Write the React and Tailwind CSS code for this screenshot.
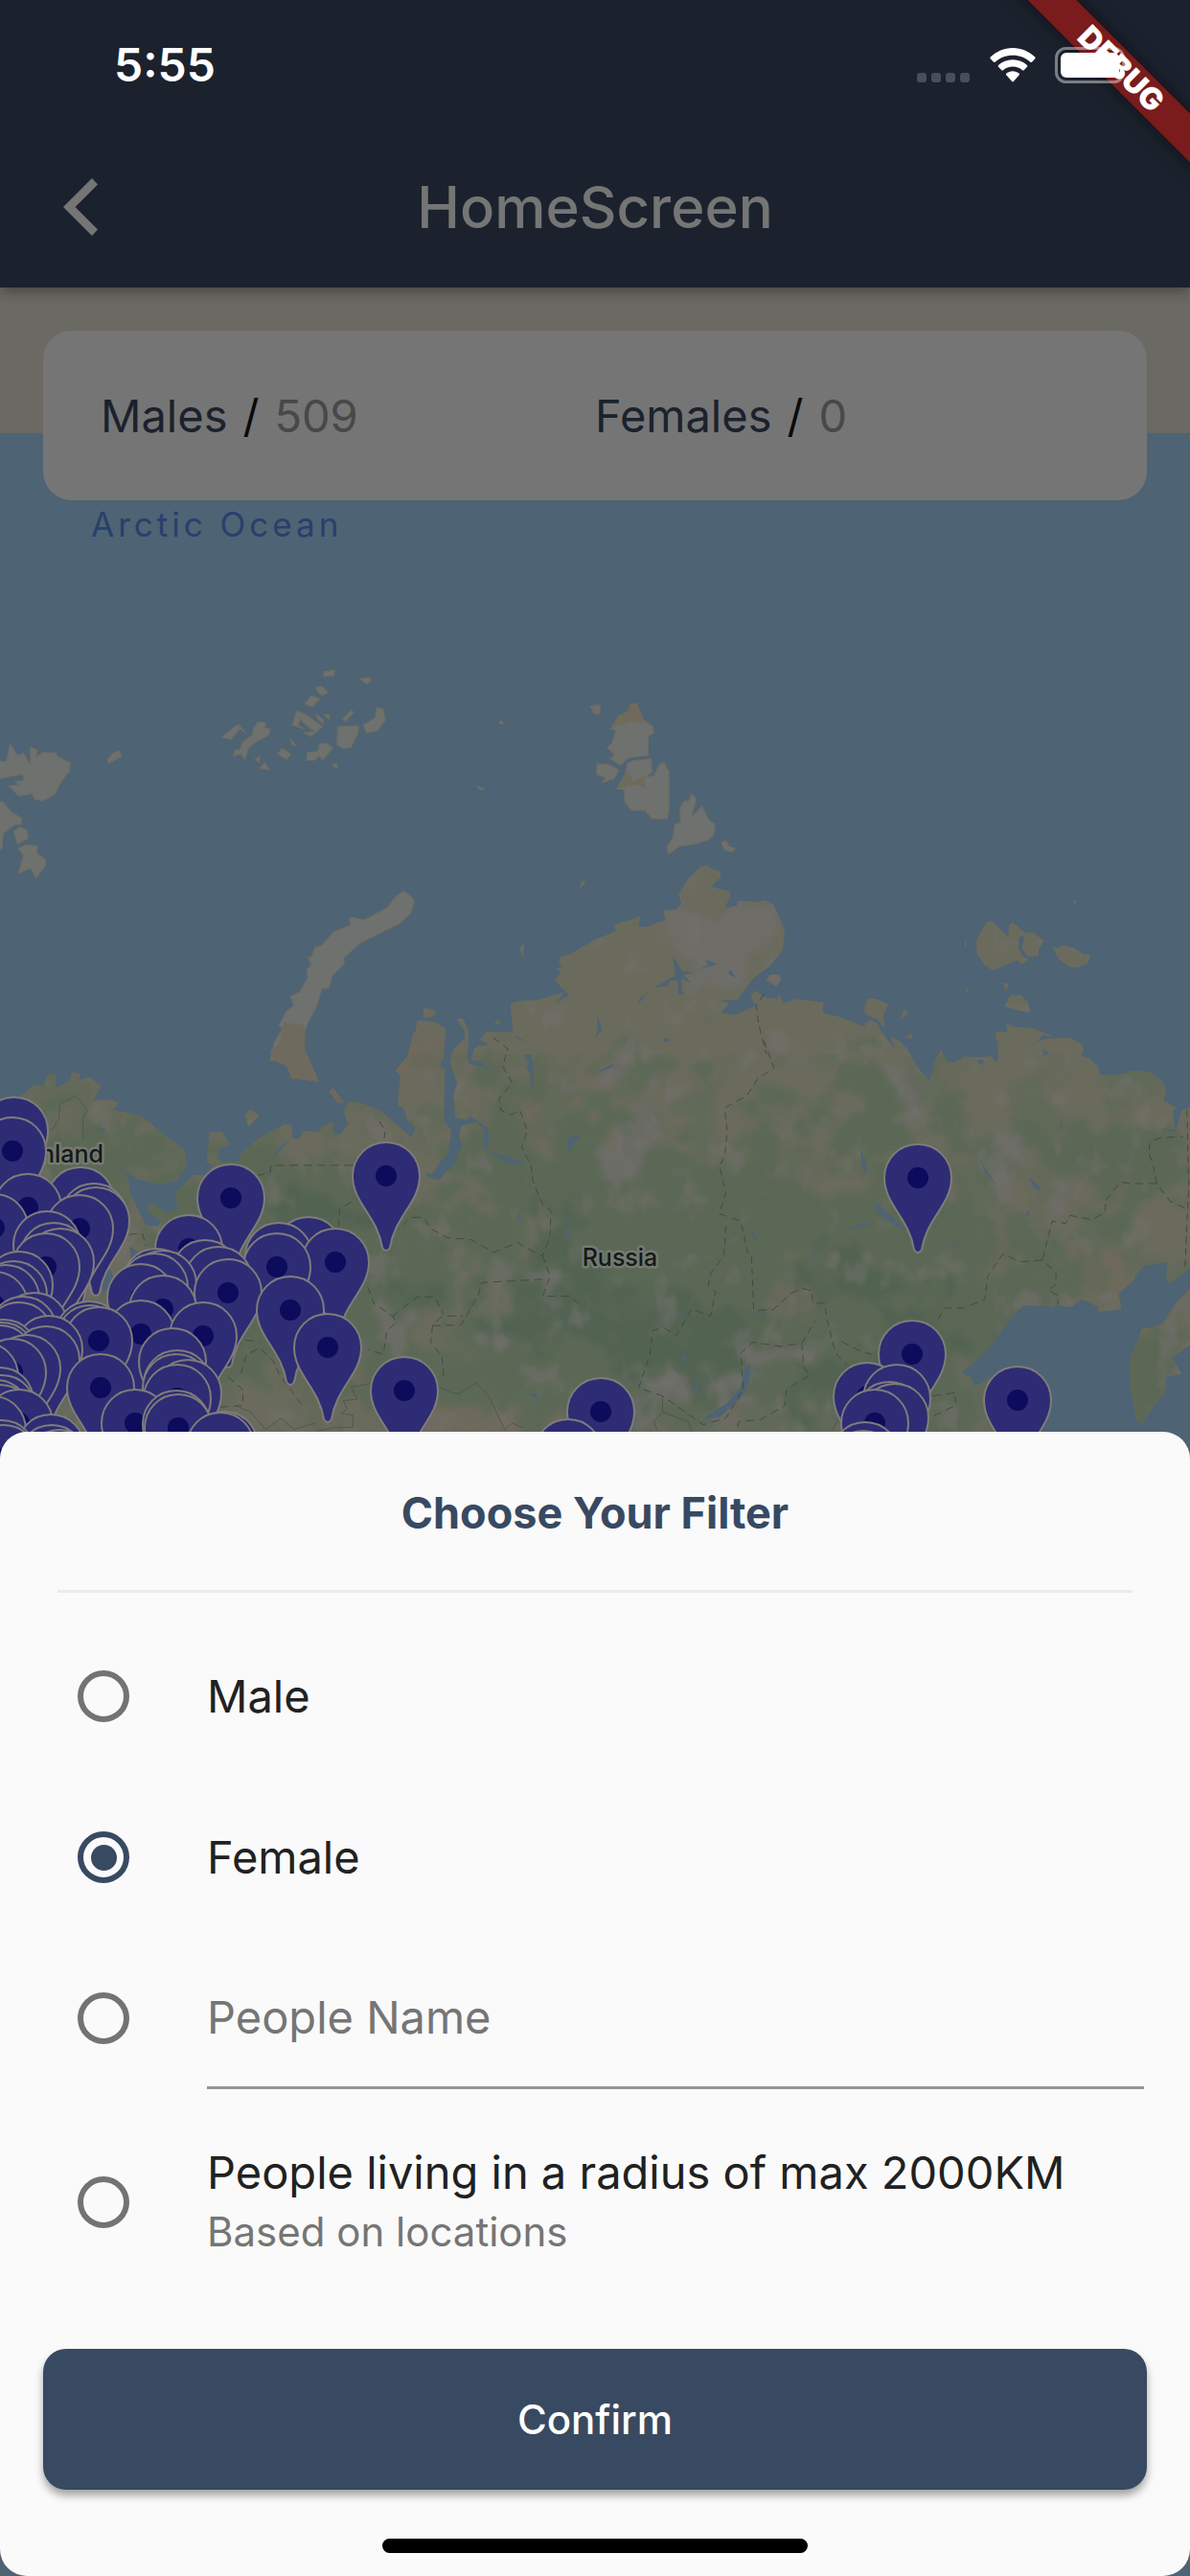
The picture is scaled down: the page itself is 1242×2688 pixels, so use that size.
import { useState } from "react";

/* Each map tile keeps its own drawing grid, placed on the 1242 x 2688 map. */
const NW = "translate(0 640) scale(0.396 0.3333)";
const NE = "translate(621 640) scale(0.396 0.3333)";
const SW = "translate(0 1080) scale(0.396 0.3333)";
const SE = "translate(621 1080) scale(0.396 0.3333)";

const land = [
  [NW, "M1580 1018L1540 1040L1500 1068L1478 1075L1472 1092L1482 1104L1468 1112L1478 1128L1462 1145L1478 1170L1500 1195L1465 1220L1488 1186L1410 1212L1380 1211L1345 1220L1352 1320L1385 1340L1400 1370L1400 1400L1580 1400Z"],
  [NW, "M1118 1234L1148 1242L1148 1258L1130 1266L1115 1264Z M1100 1275L1145 1279L1176 1300L1168 1400L1080 1400Z M1204 1270L1220 1268L1234 1305L1236 1340L1230 1400L1190 1380L1225 1350L1225 1310Z M1266 1332L1285 1306L1306 1328L1330 1330L1362 1380L1362 1400L1240 1400L1250 1362L1290 1350Z M1302 1284L1312 1270L1320 1288Z"],
  [NE, "M-10 1025L20 1012L55 995L50 975L120 948L115 980L135 982L185 960L180 930L215 928L228 910L220 880L240 840L275 795L297 788L312 802L330 808L332 825L305 856L355 870L357 885L342 922L375 915L376 900L430 903L448 898L470 912L485 950L500 988L495 1055L460 1105L420 1140L375 1210L330 1211L355 1222L332 1250L370 1257L425 1228L410 1202L420 1180L450 1203L480 1205L487 1192L495 1222L530 1207L602 1218L600 1252L640 1262L720 1298L745 1320L790 1365L790 1400L-10 1400Z"],
  [NE, "M1005 1025L1032 966L1046 962L1088 1012L1092 976L1102 967L1132 998L1158 1000L1183 1027L1170 1050L1168 1074L1140 1074L1124 1048L1133 1012L1118 1012L1116 1050L1128 1074L1144 1084L1124 1100L1114 1085L1048 1118L1026 1100L1006 1065Z M1206 1045L1218 1048L1235 1040L1260 1046L1290 1068L1307 1070L1296 1098L1272 1109L1250 1106L1222 1082Z M1258 903L1272 895L1266 910Z M973 1040L978 1017L979 1044Z M970 1163L986 1180L984 1188Z M1076 1158L1091 1158L1082 1186Z M1080 1230L1095 1195L1124 1195L1142 1220L1146 1250L1114 1243Z M708 1235L720 1207L740 1206L773 1225L760 1260L764 1300L746 1272L712 1255Z M802 1274L815 1240L827 1250Z M818 1328L834 1315L836 1334Z M452 1150L460 1132L486 1131L491 1145L478 1168Z M708 1285L728 1274L745 1285L758 1320L790 1360L740 1325Z M780 1326L810 1344L826 1400L800 1400Z M1053 1325L1062 1315L1088 1313L1084 1284L1105 1295L1150 1298L1214 1326L1180 1320L1165 1342L1190 1332L1250 1328L1284 1350L1288 1372L1270 1400L1062 1400L1062 1345Z M904 1380L914 1368L920 1400L900 1400Z"],
  [SW, "M-10 250L60 185L90 155L112 158L130 120L150 125L145 165L165 155L184 142L190 115L212 122L208 140L235 132L267 160L245 205L290 202L312 212L300 235L375 255L430 310L487 360L491 410L465 455L425 467L360 450L300 405L335 440L345 500L370 560L385 598L418 597L425 582L390 555L390 535L405 528L440 558L470 545L462 495L510 438L545 440L560 410L545 395L552 305L585 303L607 345L580 355L572 385L590 400L632 395L635 370L680 325L750 278L768 282L772 325L790 325L800 300L840 303L850 285L878 272L880 310L895 312L918 278L905 240L920 208L950 212L1000 235L1035 270L1085 320L1095 290L1072 265L1065 230L1048 220L1055 130L1043 110L1075 65L1090 -10L1175 -10L1160 98L1172 105L1170 270L1190 300L1180 370L1155 405L1140 435L1120 433L1132 447L1160 453L1170 435L1200 405L1207 370L1220 345L1210 320L1215 285L1255 272L1275 295L1272 355L1285 355L1290 318L1285 290L1240 255L1228 265L1200 260L1195 190L1205 150L1185 85L1195 45L1225 10L1230 -10L1236 -10L1230 50L1236 90L1275 102L1298 122L1280 95L1250 70L1248 45L1265 30L1300 60L1310 45L1265 15L1285 -10L1350 -10L1360 10L1388 22L1402 60L1380 62L1395 88L1388 105L1400 130L1398 175L1408 165L1405 80L1410 50L1395 -10L1580 -10L1580 1320L-10 1320Z"],
  [SW, "M740 -10L803 -10L803 45L815 75L832 120L840 146L768 136L755 96L722 80L712 50L735 30Z M645 250L660 232L684 252L654 287Z M866 178L878 164L908 212L892 215Z"],
  [SE, "M-10 -10L755 -10L792 48L783 10L820 38L850 102L880 142L890 120L895 80L912 48L930 85L950 85L975 67L1020 70L1045 66L1055 85L1067 75L1066 20L1055 -10L1175 -10L1165 22L1195 10L1250 12L1287 45L1270 60L1305 75L1325 100L1332 125L1375 125L1420 112L1460 115L1496 145L1505 172L1498 205L1535 230L1524 235L1528 296L1482 290L1530 305L1545 235L1580 225L1580 720L1515 778L1505 760L1510 712L1450 720L1430 745L1418 770L1380 810L1388 858L1328 867L1325 850L1283 827L1255 853L1215 845L1205 855L1190 847L1128 847L1090 895L1065 940L1030 990L965 1060L990 1070L1000 1100L1025 1085L1040 1070L1060 1110L1130 1180L1150 1320L-10 1320Z"],
  [SE, "M1580 780L1530 840L1495 905L1440 920L1430 960L1410 1010L1410 1090L1426 1205L1442 1218L1470 1165L1500 1125L1505 1070L1545 1060L1520 1010L1580 960Z"],
];

const icyIslands = [
  [NW, "M584 388L628 347L650 378L632 362L608 395Z M668 360L680 340L700 342L697 358L712 362L708 382L678 400L656 420L645 460L636 440L614 447L620 428L632 426L640 402L665 382Z M770 350L782 306L806 316L850 355L820 386L802 374L828 370L790 332L786 350L802 362Z M834 316L852 332L852 344L836 330Z M852 318L868 316L868 332Z M902 330L926 304L932 310L912 338Z M890 355L945 352L943 378L925 420L902 422L888 412Z M958 350L988 328L992 295L1010 300L1015 335L995 368L965 374Z M853 182L882 178L880 196L853 198Z M948 205L972 200L980 210L966 222Z M833 232L848 228L866 248L850 257L836 246Z M820 257L842 268L824 293L803 284Z M765 393L782 416L770 412Z M732 440L744 422L766 440L755 458Z M810 435L838 432L842 408L860 407L878 422L850 460L842 446L830 460L808 460Z M672 458L684 447L684 467Z M684 485L698 468L710 490Z M876 476L888 468L890 486Z M283 458L300 436L314 430L321 448L285 470Z M1314 346L1320 334L1328 347Z M1256 538L1278 552L1264 551Z M1372 1050L1380 1034L1378 1075Z M1528 860L1534 840L1542 840Z M1556 290L1580 286L1580 316L1565 314Z"],
  [NW, "M-10 460L16 465L27 410L46 445L62 438L80 475L80 418L98 428L96 450L112 436L146 436L152 448L186 468L182 495L160 530L144 568L112 587L92 582L84 565L50 572L22 540L50 538L40 526L62 524L60 504L-10 520Z M-10 590L8 590L30 622L58 642L56 660L38 662L8 690L6 735L-10 745Z M36 682L54 669L72 680L74 705L46 722Z M48 736L68 724L98 728L98 752L120 770L120 790L95 830L82 798L48 814L62 758Z"],
  [NW, "M1063 870L1080 882L1092 902L1082 940L1055 970L950 1032L905 1080L908 1096L875 1135L868 1172L848 1175L835 1230L820 1262L805 1300L798 1400L712 1400L722 1345L745 1300L735 1290L755 1245L775 1227L765 1200L790 1185L812 1140L808 1115L820 1100L812 1075L820 1078L830 1045L848 1040L880 997L925 975L920 955L932 952L960 960L1022 920L1040 890Z"],
  [NE, "M-6 290L12 290L15 304L0 314Z M42 362L62 322L88 306L94 283L110 283L127 332L153 354L155 375L140 385L140 445L90 452L66 475L40 455L52 442L32 420L45 405L55 366Z M5 470L36 473L63 490L50 518L18 530L28 515L5 505Z M85 470L98 462L148 455L150 498L132 514L156 508L170 472L182 468L195 495L195 620L190 644L150 643L132 617L96 617L78 590L78 552L58 550L80 502Z M224 610L235 588L248 588L254 565L267 580L255 638L282 603L300 647L316 660L314 690L302 708L264 722L225 728L194 753L190 732L206 700L210 662L225 655Z M332 718L345 710L354 730L370 736L362 747L342 740Z"],
];

const lakes = [
  [NE, "M204 1070L230 1120L262 1124L232 1130L254 1158L226 1142L232 1195L220 1190L218 1150L196 1148L194 1168L155 1170L212 1135Z M270 1116L298 1100L290 1083L322 1098Z M352 1130L356 1114L372 1141Z M114 1224L118 1205L140 1186Z M6 1256L18 1305L0 1330L8 1300Z M180 1326L198 1336L184 1344Z"],
  [SE, "M-5 122L52 88L40 105Z M700 352L714 400L714 438L704 410Z M738 525L765 550L822 612L805 605L745 560Z M645 614L712 588L726 596Z M1010 380L1030 420L1058 472L1030 435Z M1142 445L1175 475L1170 487L1155 475Z M1132 572L1142 548L1146 560Z M1224 298L1230 258L1230 290Z M410 615L432 643L418 640Z M434 668L444 705L438 696Z M576 700L582 670L584 704Z M938 645L958 668L944 662Z M415 888L470 848L440 875Z M352 948L395 905L370 935Z M218 866L246 872L224 876Z M226 1010L240 1002L240 1030Z M264 1110L268 1055L272 1125Z M395 1040L410 1032L405 1090L385 1135L330 1195L285 1203L300 1190L350 1150L385 1105Z M1180 45L1198 56L1182 65Z M1005 80L1025 78L1020 95Z M180 8L198 16L184 24Z"],
  [SW, "M255 292L282 294L270 306Z M722 380L730 358L762 328L745 355Z M1282 358L1380 400L1376 408L1330 398Z M1496 370L1498 325L1535 310L1510 345Z M1490 635L1494 560L1500 638Z M1364 550L1378 586L1366 575Z M1390 1125L1414 1122L1416 1138Z M270 740L290 735L300 760L270 815Z M342 660L365 680L345 700Z"],
];

const borders = [
  [NE, "M445 1193L425 1228L432 1290L452 1380"],
  [SE, "M445 18L472 104L430 135L400 190L342 228L348 300L342 380L328 410L338 460L345 490L328 560L382 582L390 610L402 680L412 685L415 760L418 862L470 860L515 810L545 793L570 800L575 838L605 840L610 880L630 980L640 1005L665 1032"],
  [SE, "M345 598L340 690L305 745L298 785L318 805L305 880L255 858L215 940L180 915L152 925L145 1000L115 1105L178 1130L285 1220L345 1200L390 1110L385 995L415 962L490 975L545 965L580 895"],
  [SE, "M905 890L920 855L970 855L1028 828L1035 755L1075 685L1120 710L1180 705L1215 745L1215 780L1195 800L1220 815L1220 845"],
  [SE, "M1180 700L1205 582L1240 590L1252 565L1310 578L1345 555L1345 520L1368 485L1385 460L1410 465L1480 465L1515 520L1560 545M1480 465L1472 410L1460 370L1462 335L1490 322L1550 318M1560 235L1565 470L1555 725"],
  [SE, "M545 965L550 1040L565 1065L505 1110L500 1160L435 1205L380 1210L372 1240M650 960L700 990L730 1000M890 1130L950 1120L950 1160L880 1200"],
  [SW, "M1300 8L1338 42L1325 98L1350 150L1315 200L1320 235L1348 250L1370 235L1390 300L1375 350L1400 410L1405 460L1430 530L1452 550L1450 630L1430 692L1400 675L1365 650L1300 680L1240 640L1180 635L1140 610L1115 570L1080 572L1050 610"],
  [SW, "M1430 692L1450 755L1430 818L1500 818L1535 850M1430 765L1270 775L1260 815L1215 908L1140 910L1165 880L1220 880M970 790L985 840L1035 880L1045 900L1020 925L1010 1000L970 985M1035 880L1100 820L1145 820L1170 875M1140 910L1135 960L1165 1010L1170 1080"],
  [SW, "M1000 270L1015 300L1012 332M930 408L715 408L712 430L680 440M955 500L895 545L892 600M340 625L375 620L385 660M620 980L645 955L685 960M635 1060L650 1000L685 980L720 1020L735 1060L800 1165M580 1165L640 1160L640 1110L590 1060"],
];

const thinBorders = [
  [SW, "M135 300L155 265L158 215L200 190L230 235L218 265L220 330M975 1092L925 1102L942 1140L905 1145L915 1170L898 1185L930 1190L930 1228L880 1230L835 1240M1088 1090L1115 1125L1145 1095L1195 1122L1210 1123L1255 1090L1288 1130L1330 1235L1350 1215L1380 1230M620 1160L660 1180L700 1235L740 1200L775 1235L830 1215"],
  [SE, "M178 1130L178 1180L155 1212L165 1240M178 1180L245 1210L255 1240M645 1195L625 1240"],
];

const greens = [
  [70, 1200, 60, 50], [140, 1200, 44, 30], [200, 1260, 60, 40], [300, 1260, 90, 60], [360, 1270, 110, 60],
  [330, 1340, 160, 50], [400, 1420, 50, 70], [520, 1230, 36, 100], [560, 1400, 70, 90], [600, 1250, 50, 60],
  [560, 1130, 16, 30], [610, 1180, 26, 50], [760, 1240, 80, 50], [700, 1310, 120, 80], [690, 1420, 150, 70],
  [830, 1160, 30, 34], [910, 1170, 34, 50], [880, 1280, 90, 50], [960, 1300, 80, 70], [1000, 1380, 80, 50],
  [1000, 1180, 30, 40], [1120, 1200, 60, 32], [1200, 1210, 40, 50], [1160, 1270, 40, 26], [900, 1095, 18, 14],
  [860, 1420, 120, 60], [950, 1460, 60, 60], [1200, 1430, 30, 80], [1090, 1330, 40, 30], [650, 1230, 60, 20],
  [480, 1440, 60, 26], [240, 1400, 60, 40], [680, 1110, 50, 14],
];

const darkGreens = [
  [660, 1370, 80, 50], [720, 1420, 90, 40], [350, 1270, 60, 30], [900, 1340, 90, 22], [960, 1390, 60, 22],
  [540, 1370, 40, 26], [590, 1320, 20, 60], [760, 1390, 60, 36], [430, 1340, 30, 24], [870, 1440, 50, 24],
  [600, 1270, 12, 34],
];

const tans = [
  [640, 1160, 26, 30], [300, 1100, 18, 34], [440, 1095, 22, 20], [480, 1480, 110, 30], [560, 1160, 20, 30],
  [1140, 1320, 40, 22], [700, 980, 40, 12], [1070, 1310, 40, 12], [560, 1490, 60, 24], [420, 1330, 34, 16],
];

const pales = [
  [665, 1170, 22, 46], [730, 990, 34, 40], [770, 980, 36, 34], [640, 1220, 14, 30], [950, 1130, 14, 40],
  [895, 1115, 8, 16], [1040, 1210, 14, 36], [1060, 1240, 24, 28], [800, 1420, 30, 20], [690, 1460, 26, 22],
  [420, 1390, 14, 26], [560, 1350, 18, 12], [525, 1410, 12, 12], [1215, 1400, 8, 44], [760, 1480, 24, 16],
];

/* Pin heads: x and y of the dot. */
const pins = [
  [15, 1180], [13, 1201], [84, 1253], [29, 1260], [-6, 1281], [98, 1270], [100, 1274], [83, 1282], [49, 1299],
  [56, 1311], [63, 1317], [48, 1322], [241, 1250], [197, 1303], [322, 1305], [291, 1311], [289, 1322], [350, 1317],
  [403, 1227], [214, 1329], [228, 1336], [238, 1349], [163, 1338], [170, 1340], [161, 1343], [147, 1354],
  [170, 1366], [303, 1367], [342, 1406], [212, 1394], [147, 1392], [20, 1341], [14, 1351], [6, 1355], [-6, 1362],
  [36, 1384], [24, 1388], [20, 1394], [93, 1393], [94, 1397], [103, 1399], [4, 1412], [2, 1415], [0, 1418],
  [51, 1408], [48, 1419], [28, 1428], [13, 1432], [-16, 1436], [180, 1421], [185, 1444], [184, 1448],
  [196, 1454], [185, 1459], [105, 1448], [0, 1462], [2, 1470], [-4, 1475], [0, 1480], [20, 1485], [-8, 1492],
  [141, 1485], [184, 1486], [186, 1490], [230, 1509], [234, 1508], [53, 1511], [54, 1522], [62, 1527], [2, 1517],
  [4, 1522], [422, 1451], [627, 1473], [593, 1516], [958, 1229], [952, 1413], [905, 1457], [936, 1459],
  [928, 1477], [934, 1479], [913, 1485], [903, 1519], [901, 1528], [1062, 1461],
].sort((a, b) => a[1] - b[1]);

function Patches({ items, fill, opacity }) {
  return (
    <g fill={fill} opacity={opacity}>
      {items.map(([x, y, rx, ry], i) => (
        <ellipse key={i} cx={x} cy={y} rx={rx} ry={ry} />
      ))}
    </g>
  );
}

function Shapes({ items }) {
  return items.map(([t, d], i) => <path key={i} d={d} transform={t} />);
}

function WorldMap() {
  return (
    <svg
      className="absolute inset-0 h-full w-full bg-[#4e6374] font-[Inter,sans-serif]"
      viewBox="0 0 1242 2688"
      preserveAspectRatio="xMidYMin slice"
      role="img"
      aria-label="Map of Russia with people locations"
    >
      <defs>
        <clipPath id="land">
          {land.map(([t, d], i) => (
            <path key={i} d={d} transform={t} />
          ))}
        </clipPath>
        <filter id="terrain" x="0" y="600" width="1242" height="1000" filterUnits="userSpaceOnUse" colorInterpolationFilters="sRGB">
          <feTurbulence type="fractalNoise" baseFrequency="0.022" numOctaves="4" seed="4" result="n" />
          <feDisplacementMap in="SourceGraphic" in2="n" scale="130" xChannelSelector="R" yChannelSelector="G" />
          <feGaussianBlur stdDeviation="3" />
        </filter>
        <filter id="peaks" x="0" y="600" width="1242" height="1000" filterUnits="userSpaceOnUse" colorInterpolationFilters="sRGB">
          <feTurbulence type="fractalNoise" baseFrequency="0.034 0.026" numOctaves="3" seed="11" />
          <feColorMatrix values="0 0 0 0 0.455  0 0 0 0 0.445  0 0 0 0 0.43  5 0 0 0 -2.9" />
        </filter>
        <filter id="woods" x="0" y="1100" width="1242" height="500" filterUnits="userSpaceOnUse" colorInterpolationFilters="sRGB">
          <feTurbulence type="fractalNoise" baseFrequency="0.02" numOctaves="3" seed="23" />
          <feColorMatrix values="0 0 0 0 0.36  0 0 0 0 0.41  0 0 0 0 0.338  0 5 0 0 -2.4" />
        </filter>
      </defs>
      <rect width="1242" height="452" fill="#6a6963" />
      <g clipPath="url(#land)">
        <rect y="600" width="1242" height="1000" fill="#6a6b5d" />
        <g filter="url(#terrain)">
          <Patches items={tans} fill="#706a5c" opacity="0.9" />
          <Patches items={greens} fill="#5c6956" opacity="0.95" />
          <Patches items={darkGreens} fill="#536353" opacity="0.95" />
          <Patches items={pales} fill="#6f6e6a" opacity="0.85" />
        </g>
        <rect y="1130" width="1242" height="400" filter="url(#woods)" opacity="0.6" />
        <rect y="600" width="1242" height="1000" filter="url(#peaks)" opacity="0.5" />
      </g>
      <g fill="#6f716f" stroke="#6b6c62" strokeWidth="3">
        <Shapes items={icyIslands} />
      </g>
      <path
        transform={SW}
        fill="#6e6a5e"
        d="M748 -40L803 -30L803 45L815 75L832 120L840 146L768 136L755 96L722 80L712 50L735 30Z"
      />
      <path transform={NE} fill="#706a5c" d="M42 358L62 322L88 306L94 283L110 283L127 332L140 345L95 340Z M58 550L85 495L100 525L130 510L134 548L110 535Z" />
      <g fill="#4e6374">
        <Shapes items={lakes} />
      </g>
      <g fill="none" stroke="#42453f" strokeWidth="2.4" strokeDasharray="22 14">
        <Shapes items={borders} />
      </g>
      <g fill="none" stroke="#4c4e47" strokeWidth="2">
        <Shapes items={thinBorders} />
      </g>
      <text x="95" y="560" fontSize="35" letterSpacing="4" fill="#28406b">
        Arctic Ocean
      </text>
      <g fontSize="25" fontWeight="500" fill="#171817" stroke="#737a70" strokeWidth="5" strokeLinejoin="round" paintOrder="stroke">
        <text x="647" y="1321" textAnchor="middle">Russia</text>
        <text x="108" y="1213" textAnchor="end">Finland</text>
      </g>
      <g>
        {pins.map(([x, y], i) => (
          <g key={i} transform={`translate(${x} ${y})`}>
            <path
              d="M0 -35C20 -35 35 -19 35 0C35 28 9 42 4 75Q0 81 -4 75C-9 42 -35 28 -35 0C-35 -19 -20 -35 0 -35Z"
              fill="#2d2c74"
              stroke="#7f7c7b"
              strokeWidth="2"
            />
            <circle r="11" fill="#0c0b5c" />
          </g>
        ))}
      </g>
    </svg>
  );
}

function StatusBar() {
  return (
    <div className="relative z-10 flex h-[132px] items-center justify-between pt-1 pr-[63px] pl-[119px] text-white">
      <span className="text-[48px] leading-none font-semibold">5:55</span>
      <div className="flex items-center gap-5">
        <svg className="h-9 w-14" viewBox="0 0 56 36" fill="#494f59" aria-hidden="true">
          <rect y="26" width="10" height="10" rx="3" />
          <rect x="15" y="26" width="10" height="10" rx="3" />
          <rect x="30" y="26" width="10" height="10" rx="3" />
          <rect x="45" y="26" width="10" height="10" rx="3" />
        </svg>
        <svg className="h-9 w-12" viewBox="0 0 48 36" aria-label="Wi-Fi">
          <path d="M24 0C33 0 41 3.600 47.300 9.600Q48 10.500 47.300 11.300L44 14.700Q43.200 15.400 42.400 14.700C37.300 10.200 31 7.700 24 7.700S10.700 10.200 5.600 14.700Q4.800 15.400 4 14.700L0.700 11.300Q0 10.500 0.700 9.600C7 3.600 15 0 24 0Z" fill="#fff" />
          <path d="M24 12.300C29.800 12.300 35 14.400 39 18Q39.800 18.900 39 19.800L35.600 23.200Q34.800 23.900 34 23.200C31.200 20.800 27.800 19.500 24 19.500S16.800 20.800 14 23.200Q13.200 23.900 12.400 23.200L9 19.800Q8.200 18.900 9 18C13 14.400 18.200 12.300 24 12.300Z" fill="#fff" />
          <path d="M24 24.200C26.600 24.200 29 25.100 30.700 26.600Q31.400 27.500 30.700 28.300L24.800 34.900Q24 35.600 23.200 34.900L17.300 28.300Q16.600 27.500 17.300 26.600C19 25.100 21.400 24.200 24 24.200Z" fill="#fff" />
        </svg>
        <svg className="h-[38px] w-[78px]" viewBox="0 0 78 38" aria-label="Battery full">
          <rect x="1.500" y="1.500" width="70" height="35" rx="10" fill="none" stroke="#fff" strokeOpacity="0.42" strokeWidth="3" />
          <rect x="6" y="6" width="61" height="26" rx="6" fill="#fff" />
          <path d="M74 13C79 15 79 23 74 25Z" fill="#fff" fillOpacity="0.45" />
        </svg>
      </div>
    </div>
  );
}

function Header() {
  return (
    <header className="relative bg-[#1b222d] shadow-[0_4px_14px_rgba(0,0,0,0.35)]">
      <div className="absolute inset-0 overflow-hidden">
        <div className="absolute top-[54px] -right-[78px] flex h-9 w-[300px] rotate-45 items-center justify-center bg-[#7a1b1c] text-[32px] leading-none font-black text-white shadow-[0_0_18px_rgba(0,0,0,0.5)]">
          DEBUG
        </div>
      </div>
      <StatusBar />
      <div className="relative grid h-[168px] grid-cols-[168px_1fr_168px] items-center">
        <button type="button" aria-label="Back" className="flex h-full items-center justify-center">
          <svg className="h-[60px] w-9" viewBox="0 0 36 60" aria-hidden="true">
            <path d="M30 0L36 6.500L12.500 30L36 53.500L30 60L0 30Z" fill="#757575" />
          </svg>
        </button>
        <h1 className="text-center text-[60px] leading-none font-medium text-[#757575]">HomeScreen</h1>
      </div>
    </header>
  );
}

function Count({ label, value }) {
  return (
    <p className="flex gap-4 text-[47px] leading-none text-[#1b222d]">
      <span>{label}</span>
      <span className="text-[#0a0a0a]">/</span>
      <span className="text-[#484848]">{value}</span>
    </p>
  );
}

function Option({ id, value, selected, onSelect, className, children }) {
  return (
    <div className={`flex items-center ${className}`}>
      <input
        id={id}
        type="radio"
        name="filter"
        value={value}
        aria-label={value}
        checked={selected === value}
        onChange={() => onSelect(value)}
        className="mx-[81px] grid size-[54px] shrink-0 appearance-none place-items-center rounded-full border-6 border-[#737373] before:hidden before:size-[27px] before:rounded-full before:bg-[#384962] checked:border-[#384962] checked:before:block"
      />
      <div className="min-w-0 flex-1">{children}</div>
    </div>
  );
}

function FilterSheet() {
  const [selected, setSelected] = useState("Female");
  const [name, setName] = useState("");
  return (
    <form
      className="relative mt-auto flex flex-col rounded-[28px] bg-[#fafafa] text-[47px] leading-14 text-[#212121]"
      onSubmit={(e) => e.preventDefault()}
    >
      <h2 className="mx-[60px] border-b-3 border-[#ebebeb] pt-[57px] pb-[52px] text-center text-[45px] leading-14 font-bold text-[#384962]">
        Choose Your Filter
      </h2>
      <div className="flex flex-col pt-6">
        <Option id="male" value="Male" selected={selected} onSelect={setSelected} className="h-[168px]">
          <label htmlFor="male">Male</label>
        </Option>
        <Option id="female" value="Female" selected={selected} onSelect={setSelected} className="h-[168px]">
          <label htmlFor="female">Female</label>
        </Option>
        <Option id="name" value="People Name" selected={selected} onSelect={setSelected} className="h-[168px]">
          <input
            type="text"
            aria-label="People Name"
            placeholder="People Name"
            value={name}
            onChange={(e) => setName(e.target.value)}
            className="mr-12 block h-[147px] w-[calc(100%-48px)] border-b-3 border-[#969696] bg-transparent placeholder:text-[#757575] focus:outline-none"
          />
        </Option>
        <Option id="radius" value="People living in a radius of max 2000KM" selected={selected} onSelect={setSelected} className="h-[216px]">
          <label htmlFor="radius" className="flex flex-col gap-1.5">
            <span>People living in a radius of max 2000KM</span>
            <span className="text-[42px] leading-14 text-[#757575]">Based on locations</span>
          </label>
        </Option>
      </div>
      <button
        type="submit"
        className="mx-[45px] mt-[45px] h-[147px] rounded-3xl bg-[#384962] text-[42px] font-medium text-white shadow-[0_6px_9px_rgba(0,0,0,0.35)]"
      >
        Confirm
      </button>
      <div className="mx-auto mt-[51px] mb-6 h-[15px] w-[444px] rounded-full bg-black" />
    </form>
  );
}

export default function App() {
  return (
    <div className="relative flex min-h-screen flex-col overflow-hidden font-[Inter,sans-serif]">
      <WorldMap />
      <Header />
      <section className="relative mx-[45px] mt-[45px] grid h-[177px] grid-cols-2 items-center rounded-[30px] bg-[#757575] px-[60px]">
        <Count label="Males" value="509" />
        <Count label="Females" value="0" />
      </section>
      <FilterSheet />
    </div>
  );
}
